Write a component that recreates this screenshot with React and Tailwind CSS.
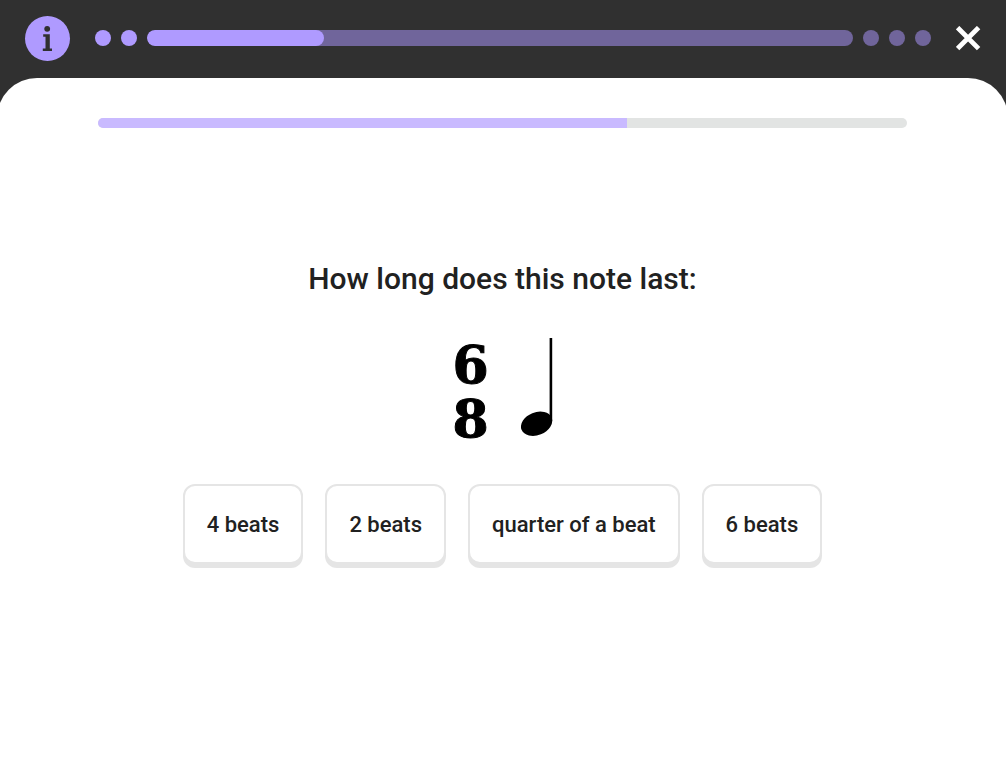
import React, { useState } from 'react';

const answers = ['4 beats', '2 beats', 'quarter of a beat', '6 beats'];

const sections = [
  { id: 1, status: 'done' },
  { id: 2, status: 'done' },
  { id: 3, status: 'current', percent: 25 },
  { id: 4, status: 'todo' },
  { id: 5, status: 'todo' },
  { id: 6, status: 'todo' },
];

const InfoIcon = () => (
  <svg viewBox="0 0 45 45" className="w-full h-full" aria-hidden="true">
    <circle cx="22.2" cy="12.8" r="2.9" fill="#303030" />
    <path d="M18.2 18.2h6.6v14.2h2.2v2.6h-9.2v-2.6h2.7V20.8h-2.3z" fill="#303030" />
  </svg>
);

const CloseIcon = () => (
  <svg viewBox="0 0 25 25" className="w-full h-full" aria-hidden="true">
    <path d="M1.6 1.6l21 21M22.6 1.6l-21 21" stroke="#fff" strokeWidth="4.8" fill="none" />
  </svg>
);

const QuarterNote = () => (
  <svg viewBox="0 0 32 100" className="w-8 h-[100px]" role="img" aria-label="Quarter note">
    <rect x="28.6" y="0" width="2.6" height="83" fill="#000" />
    <ellipse cx="15.6" cy="85.8" rx="16.2" ry="11.4" transform="rotate(-22 15.6 85.8)" fill="#000" />
  </svg>
);

const App = () => {
  const [selected, setSelected] = useState(null);

  return (
    <div className="min-h-screen flex flex-col overflow-hidden bg-[#303030] font-['Roboto',sans-serif] text-[#212121]">
      <header className="h-[78px] px-[25px] pb-0.5 flex items-center gap-[25px]">
        <button aria-label="Info" className="w-[45px] h-[45px] shrink-0 rounded-full bg-[#af9aff]">
          <InfoIcon />
        </button>

        <div className="flex-1 flex items-center gap-2.5">
          {sections.map((section) =>
            section.status === 'current' ? (
              <div key={section.id} className="flex-1 h-4 rounded-full bg-[#70659b] overflow-hidden">
                <div className="h-full rounded-full bg-[#af9aff]" style={{ width: `${section.percent}%` }} />
              </div>
            ) : (
              <div
                key={section.id}
                className={`w-4 h-4 rounded-full ${section.status === 'done' ? 'bg-[#af9aff]' : 'bg-[#70659b]'}`}
              />
            )
          )}
        </div>

        <button aria-label="Close" className="w-[25px] h-[25px] shrink-0">
          <CloseIcon />
        </button>
      </header>

      {/* the sheet bleeds slightly past both edges of the window */}
      <main className="flex-1 -ml-[3px] -mr-0.5 flex flex-col rounded-t-[40px] bg-white pt-10">
        <div className="px-[101px]">
          <div className="h-2.5 rounded-full bg-[#e2e4e3] overflow-hidden">
            <div className="h-full bg-[#c9baff]" style={{ width: '65.4%' }} />
          </div>
        </div>

        <div className="flex-1 flex flex-col items-center justify-center px-6 pb-[68px]">
          <h1 className="text-[30px] leading-[34px] font-medium text-center">How long does this note last:</h1>

          <div className="mt-[42px] flex items-start gap-8 text-black">
            <div className="flex flex-col font-['DejaVu_Serif',serif] font-bold text-[52px] leading-[54px] [-webkit-text-stroke:1px_#000]">
              <span>6</span>
              <span>8</span>
            </div>
            <QuarterNote />
          </div>

          <div className="mt-[38px] flex flex-wrap justify-center gap-[22px]">
            {answers.map((answer) => (
              <button
                key={answer}
                onClick={() => setSelected(answer)}
                aria-pressed={selected === answer}
                className={`h-20 px-[22px] pt-0.5 rounded-xl border-2 text-[22px] font-medium shadow-[0_4px_0_#e5e5e5] ${
                  selected === answer ? 'border-[#af9aff] bg-[#f5f2ff]' : 'border-[#e5e5e5] bg-white'
                }`}
              >
                {answer}
              </button>
            ))}
          </div>
        </div>
      </main>
    </div>
  );
};

export default App;
